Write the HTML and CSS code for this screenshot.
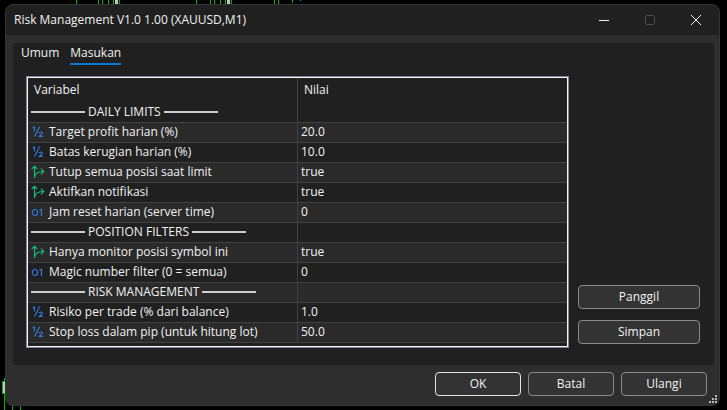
FILE: index.html
```html
<!DOCTYPE html>
<html lang="id">
<head>
<meta charset="utf-8">
<title>Risk Management V1.0</title>
<link rel="stylesheet" href="styles.css">
</head>
<body>
<svg class="chart chart-top" width="320" height="5" aria-hidden="true">
  <path d="M76.5 0V5M98.5 0V5M102.5 0V5M108.5 0V5M113.5 0V5M119.5 0V5M196.5 0V5M210.5 0V5M214.5 0V5M220.5 0V5M225.5 0V5M231.5 0V5M274.5 0V5M278.5 0V5M292.5 0V3M300.5 0V1"/>
  <path class="candle" d="M115 0h3v5h-3zM227 0h3v5h-3z"/>
</svg>
<svg class="chart chart-bottom" width="24" height="32" aria-hidden="true">
  <path d="M4.5 0V32M12.5 26V32M20.5 26V32M2.5 3.5H6M2.5 15.5H6M2.5 3V16"/>
  <path class="candle" d="M3 4h3v11h-3z"/>
</svg>

<svg class="symbols" aria-hidden="true">
  <symbol id="half" viewBox="0 0 14 14">
    <path d="M1.5 3L3.5 2V6.5M8.7 1.5L3.5 11.5M8 8.2C8.2 6.8 11.3 6.8 11.3 8.3C11.3 9.3 9 10.2 8.2 11.4H12"/>
  </symbol>
  <symbol id="branch" viewBox="0 0 14 14">
    <path d="M3.5 13V1.5M.7 4L3.5 1.2L6.3 4M3.5 12C4.2 8.8 6.5 6.5 12.5 6.5M10 3.7L12.8 6.5L10 9.3"/>
  </symbol>
  <symbol id="integer" viewBox="0 0 14 14">
    <ellipse cx="4" cy="7.5" rx="2.7" ry="3"/><path d="M8.5 5.5L10.5 4.3V11"/>
  </symbol>
</svg>

<main class="dialog">
  <header class="titlebar">
    <h1>Risk Management V1.0 1.00 (XAUUSD,M1)</h1>
    <div class="window-controls">
      <button type="button" aria-label="Minimize"><svg width="12" height="12"><path d="M1 6.5H11"/></svg></button>
      <button type="button" aria-label="Maximize" disabled><svg width="12" height="12"><rect x="1.5" y="1.5" width="9" height="9" rx="1"/></svg></button>
      <button type="button" aria-label="Close"><svg width="12" height="12"><path d="M1 1L11 11M11 1L1 11"/></svg></button>
    </div>
  </header>

  <section class="panel">
    <nav class="tabs">
      <a href="#umum">Umum</a>
      <a href="#masukan" class="active" aria-current="page">Masukan</a>
    </nav>
    <div class="content">
      <div class="frame">
        <table>
          <thead><tr><th>Variabel</th><th>Nilai</th></tr></thead>
          <tbody>
            <tr class="group"><td><div class="name"><i></i>DAILY LIMITS<i></i></div></td><td></td></tr>
            <tr><td><div class="name"><svg class="num"><use href="#half"/></svg>Target profit harian (%)</div></td><td>20.0</td></tr>
            <tr><td><div class="name"><svg class="num"><use href="#half"/></svg>Batas kerugian harian (%)</div></td><td>10.0</td></tr>
            <tr><td><div class="name"><svg class="bool"><use href="#branch"/></svg>Tutup semua posisi saat limit</div></td><td>true</td></tr>
            <tr><td><div class="name"><svg class="bool"><use href="#branch"/></svg>Aktifkan notifikasi</div></td><td>true</td></tr>
            <tr><td><div class="name"><svg class="num"><use href="#integer"/></svg>Jam reset harian (server time)</div></td><td>0</td></tr>
            <tr class="group"><td><div class="name"><i></i>POSITION FILTERS<i></i></div></td><td></td></tr>
            <tr><td><div class="name"><svg class="bool"><use href="#branch"/></svg>Hanya monitor posisi symbol ini</div></td><td>true</td></tr>
            <tr><td><div class="name"><svg class="num"><use href="#integer"/></svg>Magic number filter (0 = semua)</div></td><td>0</td></tr>
            <tr class="group"><td><div class="name"><i></i>RISK MANAGEMENT<i></i></div></td><td></td></tr>
            <tr><td><div class="name"><svg class="num"><use href="#half"/></svg>Risiko per trade (% dari balance)</div></td><td>1.0</td></tr>
            <tr><td><div class="name"><svg class="num"><use href="#half"/></svg>Stop loss dalam pip (untuk hitung lot)</div></td><td>50.0</td></tr>
          </tbody>
        </table>
      </div>
      <div class="side">
        <button type="button" class="btn">Panggil</button>
        <button type="button" class="btn">Simpan</button>
      </div>
    </div>
  </section>

  <footer class="actions">
    <button type="button" class="btn default">OK</button>
    <button type="button" class="btn">Batal</button>
    <button type="button" class="btn">Ulangi</button>
  </footer>
  <svg class="grip" width="8" height="8" aria-hidden="true"><path d="M6 0h2v2h-2zM3 3h2v2h-2zM6 3h2v2h-2zM0 6h2v2h-2zM3 6h2v2h-2zM6 6h2v2h-2z"/></svg>
</main>
</body>
</html>
```
FILE: styles.css
```css
* { box-sizing: border-box; }

body {
  margin: 0;
  padding: 4px 7px 4px 5px;
  background: #000;
  color: #f2f2f2;
  font: 12px/16px "Open Sans", "Noto Sans", sans-serif;
}

button { font: inherit; color: inherit; }

.symbols { display: none; }

.chart { position: absolute; left: 0; fill: none; stroke: #00b800; }
.chart-top { top: 0; }
.chart-bottom { top: 378px; }
.chart .candle { fill: #c4c4c4; stroke: none; }

.dialog {
  position: relative;
  background: #2e2e2e;
  border: 1px solid #343434;
  border-radius: 8px;
  overflow: hidden;
}

.titlebar {
  display: flex;
  justify-content: space-between;
  align-items: center;
  height: 30px;
  padding-left: 8px;
  background: #202020;
}
.titlebar h1 { margin: 0; font-size: 12px; font-weight: 400; }

.window-controls { display: flex; }
.window-controls button {
  display: flex;
  align-items: center;
  justify-content: center;
  width: 46px;
  height: 28px;
  padding: 0;
  border: 0;
  background: none;
}
.window-controls svg { fill: none; stroke: #f0f0f0; }
.window-controls button:disabled svg { stroke: #4c4c4c; }

.panel {
  margin: 8px 5px 0 7px;
  padding: 0 0 17px 13px;
  background: #202020;
}

.tabs { display: flex; gap: 11px; padding-left: 8px; margin-left: -13px; }
.tabs a {
  padding: 2px 0;
  border-bottom: 2px solid transparent;
  color: inherit;
  text-decoration: none;
}
.tabs .active { border-color: #0078d4; }

.content {
  display: grid;
  grid-template-columns: 1fr 122px;
  gap: 9px;
  padding: 11px 14px 0 0;
}

.frame {
  padding: 0 0 3px;
  border: 1px solid #f4f4f8;
  outline: 1px solid #85858f;
  margin: 1px;
}

table { width: 100%; table-layout: fixed; border-collapse: collapse; }
th { height: 24px; padding: 0 6px; font-weight: 400; text-align: left; }
td { height: 20px; padding: 0 3px; border-bottom: 1px solid #414141; line-height: 16px; }
th:first-child, td:first-child { border-right: 1px solid #414141; }
tbody tr:nth-child(even) { background: #2a2a2a; }

.name { display: flex; align-items: center; gap: 4px; white-space: nowrap; }
.name svg { flex: none; width: 14px; height: 14px; fill: none; stroke-width: 1.2; }
.name i { width: 54px; height: 2px; background: #cfcfcf; }
.group .name { gap: 3px; }
.num { stroke: #3577d6; }
.bool { stroke: #13b97c; }

.side {
  display: flex;
  flex-direction: column;
  justify-content: flex-end;
  gap: 11px;
  padding-bottom: 4px;
}

.btn {
  height: 24px;
  padding: 0;
  border: 1px solid #8a8a8a;
  border-radius: 4px;
  background: #333;
}
.btn.default { border-color: #e4e4e4; }

.actions {
  display: flex;
  justify-content: flex-end;
  gap: 7px;
  padding: 7px 12px 9px;
}
.actions .btn { width: 86px; }

.grip { position: absolute; right: 2px; bottom: 2px; fill: #b8b8b8; }
```
